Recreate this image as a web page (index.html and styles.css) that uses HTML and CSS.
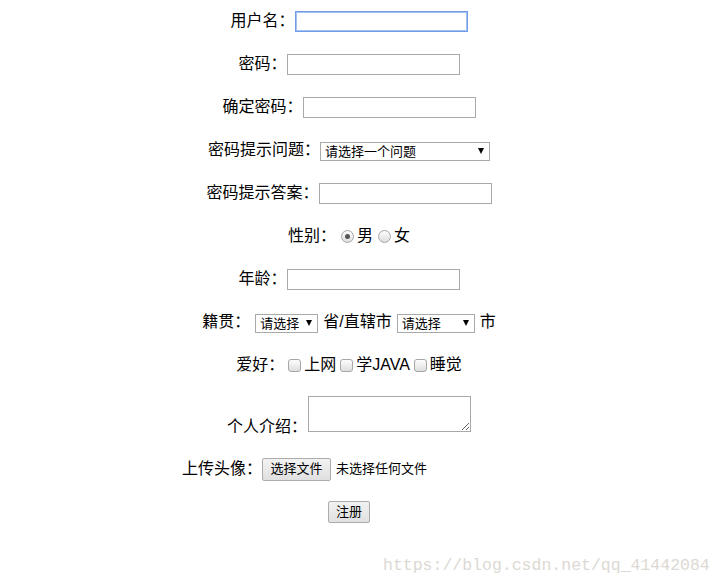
FILE: index.html
```
<!DOCTYPE html>
<html lang="zh-CN">

<head>
    <meta charset="UTF-8">
    <title>注册</title>
    <link rel="stylesheet" href="styles.css">
</head>

<body>
    <form class="reg-form">
        <div class="row">
            <label>用户名：</label>
            <input type="text" class="text-input focused">
        </div>
        <div class="row">
            <label>密码：</label>
            <input type="password" class="text-input">
        </div>
        <div class="row">
            <label>确定密码：</label>
            <input type="password" class="text-input">
        </div>
        <div class="row">
            <label>密码提示问题：</label>
            <span class="select-wrap q-select">
                <select>
                    <option>请选择一个问题</option>
                </select>
            </span>
        </div>
        <div class="row">
            <label>密码提示答案：</label>
            <input type="text" class="text-input">
        </div>
        <div class="row">
            <label>性别：</label>
            <input type="radio" name="sex" class="radio" checked><span>男</span>
            <input type="radio" name="sex" class="radio"><span>女</span>
        </div>
        <div class="row">
            <label>年龄：</label>
            <input type="text" class="text-input">
        </div>
        <div class="row">
            <label>籍贯：</label>
            <span class="select-wrap prov-select">
                <select>
                    <option>请选择</option>
                </select>
            </span>
            <span>省/直辖市</span>
            <span class="select-wrap city-select">
                <select>
                    <option>请选择</option>
                </select>
            </span>
            <span>市</span>
        </div>
        <div class="row">
            <label>爱好：</label>
            <input type="checkbox" class="check"><span>上网</span>
            <input type="checkbox" class="check"><span>学JAVA</span>
            <input type="checkbox" class="check"><span>睡觉</span>
        </div>
        <div class="row row-intro">
            <label>个人介绍：</label>
            <textarea class="intro"></textarea>
        </div>
        <div class="row">
            <label>上传头像：</label>
            <span class="file-input">
                <button type="button" class="btn">选择文件</button>
                <span class="file-name">未选择任何文件</span>
            </span>
        </div>
        <div class="row">
            <button type="button" class="btn submit-btn">注册</button>
        </div>
    </form>

    <div class="watermark">https://blog.csdn.net/qq_41442084</div>
</body>

</html>
```

FILE: styles.css
```
body {
    margin: 0;
    font-family: "Liberation Sans", "Noto Sans CJK SC", sans-serif;
    font-size: 16px;
    line-height: 20px;
    color: #000;
    background-color: #fff;
}

.reg-form {
    width: 698px;
    padding-top: 7px;
    display: flex;
    flex-direction: column;
    gap: 15px;
}

.row {
    height: 28px;
    display: flex;
    justify-content: center;
    align-items: center;
    white-space: nowrap;
}

.text-input {
    box-sizing: border-box;
    width: 173px;
    height: 21px;
    margin: 0;
    border: 1px solid #a9a9a9;
    padding: 1px 2px;
    font-size: 13px;
    outline: none;
}

.text-input.focused {
    border-color: #6f9be8;
    box-shadow: inset 0 0 0 1px #a3c0f0;
}

/* selects */
.select-wrap {
    position: relative;
    display: inline-block;
    height: 19px;
}

.select-wrap select {
    appearance: none;
    -webkit-appearance: none;
    box-sizing: border-box;
    width: 100%;
    height: 19px;
    margin: 0;
    border: 1px solid #a9a9a9;
    border-radius: 0;
    background-color: #fff;
    padding: 0 0 0 4px;
    font-family: "Liberation Sans", "Noto Sans CJK SC", sans-serif;
    font-size: 13px;
    line-height: 17px;
    color: #000;
}

.select-wrap::after {
    content: "";
    position: absolute;
    right: 6px;
    top: 7px;
    border-left: 3.5px solid transparent;
    border-right: 3.5px solid transparent;
    border-top: 6px solid #000;
}

.q-select {
    width: 170px;
}

.prov-select {
    width: 63px;
    margin: 0 5px;
}

.city-select {
    width: 78px;
    margin: 0 5px;
}

/* radio + checkbox */
.radio,
.check {
    appearance: none;
    -webkit-appearance: none;
    box-sizing: border-box;
    width: 13px;
    height: 13px;
    border: 1px solid #a6a6a6;
    background: linear-gradient(#fdfdfd, #dedede);
}

.radio {
    margin: 0 3px 0 5px;
    border-radius: 50%;
    position: relative;
}

.radio:checked::after {
    content: "";
    position: absolute;
    left: 3px;
    top: 3px;
    width: 5px;
    height: 5px;
    border-radius: 50%;
    background-color: #555;
}

.check {
    margin: 0 3px 0 4px;
    border-radius: 3px;
}

.row-intro {
    height: auto;
    align-items: flex-end;
    margin-bottom: 8px;
}

.row-intro label {
    line-height: 16px;
    margin-bottom: -3px;
}

.intro {
    box-sizing: border-box;
    width: 163px;
    height: 36px;
    margin: 2px 0 0 1px;
    border: 1px solid #a9a9a9;
    padding: 2px;
    resize: both;
}

/* buttons */
.btn {
    box-sizing: border-box;
    height: 23px;
    margin: 0;
    padding: 0 6px;
    border: 1px solid #acacac;
    border-radius: 2px;
    background: linear-gradient(#f2f2f2, #e0e0e0);
    font-family: "Liberation Sans", "Noto Sans CJK SC", sans-serif;
    font-size: 13px;
    line-height: 20px;
    color: #000;
}

.file-input {
    width: 254px;
    display: flex;
    align-items: center;
}

.file-input .btn {
    width: 69px;
}

.file-name {
    margin-left: 5px;
    font-size: 13px;
}

.submit-btn {
    width: 42px;
    height: 22px;
}

.watermark {
    position: absolute;
    left: 383px;
    top: 556px;
    font-family: "Liberation Mono", monospace;
    font-size: 16.5px;
    line-height: 20px;
    color: #dcd9d3;
}
```
